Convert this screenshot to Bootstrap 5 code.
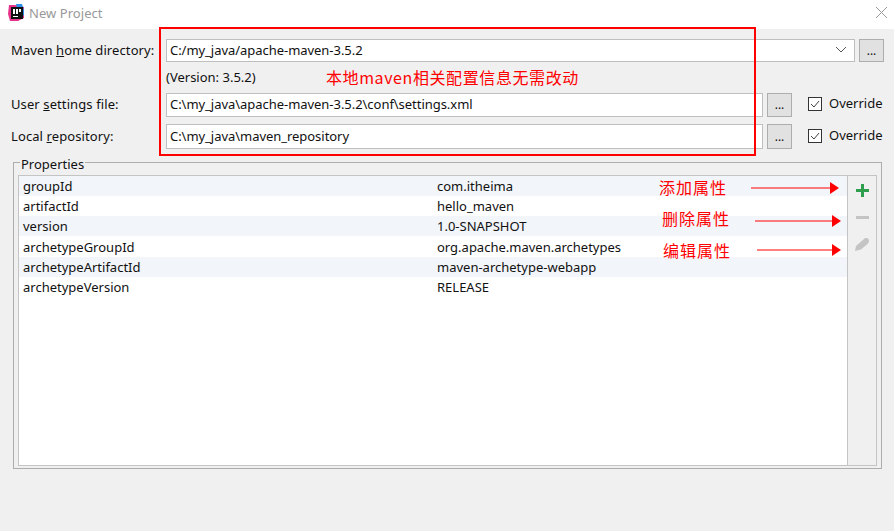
<!DOCTYPE html>
<html lang="zh"><head><meta charset="utf-8"><title>New Project</title>
<link href="https://cdn.jsdelivr.net/npm/bootstrap@5.3.0/dist/css/bootstrap.min.css" rel="stylesheet">
<style>
html,body{height:100%;margin:0}
body{background:#f0f0f0;color:#111;font:13px/18px "Noto Sans","Noto Sans CJK SC",sans-serif;overflow:hidden;position:relative}
.tbar{height:29px;background:#fff;padding:0 0 4px 8px;color:#999}
.tbar .ttl{margin-left:5px;letter-spacing:.05px}
.tbar .cls{margin-left:auto;margin-right:7px}
.frm{padding:10px 10px 0 11px}
.lbl{width:155px;flex:none;letter-spacing:.1px;padding-bottom:2px}
.fld.form-control,.fld.form-select{border-radius:0;border:1px solid #bfbfbf;background:#fff;font-size:13px;line-height:18px;color:#111;padding:0 3px 2px;display:flex;align-items:center;min-height:0;height:100%;letter-spacing:-.04px}
.fld.form-select{background-image:none;justify-content:space-between;padding-right:8px}
.r1{height:23px}.r2{height:16px;margin-top:6px;padding-left:155px;margin-bottom:9px}.r3{height:24px}.r4{height:25px;margin-top:7px}
.cell{flex:1;min-width:0;height:100%}
.b3{width:25px;height:100%;flex:none;margin-left:4px;padding:0;border-radius:0;background:#e1e1e1;border:1px solid #adadad;color:#111;font-size:12px;line-height:14px}
.endc{width:92px;flex:none;padding:0 0 2px 16px}
.endc .form-check-input{width:14px;height:14px;margin:0 7px 0 0;border-radius:0;border:1px solid #333;background-color:#fff;background-image:url("data:image/svg+xml,%3Csvg xmlns='http://www.w3.org/2000/svg' viewBox='0 0 14 14'%3E%3Cpath d='M3 7l3 3 5-6' fill='none' stroke='%23444'/%3E%3C/svg%3E");background-size:14px}
.ovr{padding-bottom:2px}
.rgrp{margin:13px 12px 0 13px;height:307px;border:1px solid #adadad;position:relative;padding:12px 4px 2px 4px}
.lgd{position:absolute;left:6px;top:-6px;background:#f0f0f0;padding:0 1px;line-height:15px}
.tblw{height:100%;border:1px solid #c4c4c4;background:#fff}
.tcol{flex:1;min-width:0}
.prow{height:20px;padding-left:4px;align-items:center}
.prow:nth-child(odd){background:#f2f5f9}
.prow:nth-child(4){height:21px}
.pk{width:414px;flex:none}
.side{width:29px;flex:none;border-left:1px solid #c4c4c4;background:#f0f0f0;padding-top:8px}
.sico{height:27px;line-height:0}
.redb{position:absolute;left:159px;top:27px;width:597px;height:129px;border:2px solid #f00;pointer-events:none}
.note{position:absolute;color:#f00;font-family:"Noto Sans CJK SC",sans-serif;font-size:16px;line-height:20px;white-space:nowrap;letter-spacing:1px}
.note1{left:326px;top:67px;letter-spacing:.6px}
.note2{left:659px;top:177px}
.note3{left:662px;top:208px}
.note4{left:663px;top:240px}
.arw{position:absolute}
.a1{left:750px;top:180px}.a2{left:754px;top:213px}.a3{left:756px;top:242px}
</style></head><body>
<div class="tbar d-flex align-items-center">
<svg width="16" height="17" viewBox="0 0 16 17"><path d="M1 1h6l9 2v11l-6 3H2L0 10z" fill="#e8318a"/><path d="M8 0h6l2 6v6L9 5z" fill="#2f8fe8"/><rect x="3" y="3" width="12" height="12" fill="#111"/><rect x="5" y="5" width="2" height="5" fill="#fff"/><rect x="8" y="5" width="2" height="5" fill="#fff"/><rect x="11" y="5" width="2" height="3" fill="#fff"/><rect x="5" y="12" width="5" height="1" fill="#fff"/></svg>
<span class="ttl">New Project</span>
<svg class="cls" width="11" height="11" viewBox="0 0 11 11"><path d="M0 0l11 11M11 0L0 11" stroke="#999" fill="none"/></svg>
</div>
<div class="frm">
<div class="d-flex align-items-center r1"><div class="lbl">Maven <u>h</u>ome directory:</div><div class="cell"><div class="fld form-select">C:/my_java/apache-maven-3.5.2<svg width="10" height="6" viewBox="0 0 10 6"><path d="M0 0l5 5 5-5" fill="none" stroke="#555"/></svg></div></div><button class="btn b3" type="button">...</button></div>
<div class="r2">(Version: 3.5.2)</div>
<div class="d-flex align-items-center r3"><div class="lbl">User <u>s</u>ettings file:</div><div class="cell"><div class="fld form-control">C:\my_java\apache-maven-3.5.2\conf\settings.xml</div></div><button class="btn b3" type="button">...</button><div class="endc d-flex align-items-center"><input class="form-check-input" type="checkbox" checked aria-label="Override"><span class="ovr">Override</span></div></div>
<div class="d-flex align-items-center r4"><div class="lbl">Local <u>r</u>epository:</div><div class="cell"><div class="fld form-control">C:\my_java\maven_repository</div></div><button class="btn b3" type="button">...</button><div class="endc d-flex align-items-center"><input class="form-check-input" type="checkbox" checked aria-label="Override"><span class="ovr">Override</span></div></div>
</div>
<div class="rgrp">
<div class="lgd">Properties</div>
<div class="tblw d-flex">
<div class="tcol">
<div class="d-flex prow"><div class="pk">groupId</div><div>com.itheima</div></div>
<div class="d-flex prow"><div class="pk">artifactId</div><div>hello_maven</div></div>
<div class="d-flex prow"><div class="pk">version</div><div>1.0-SNAPSHOT</div></div>
<div class="d-flex prow"><div class="pk">archetypeGroupId</div><div>org.apache.maven.archetypes</div></div>
<div class="d-flex prow"><div class="pk">archetypeArtifactId</div><div>maven-archetype-webapp</div></div>
<div class="d-flex prow"><div class="pk">archetypeVersion</div><div>RELEASE</div></div>
</div>
<div class="side d-flex flex-column align-items-center">
<div class="sico"><svg width="13" height="13" viewBox="0 0 13 13"><path d="M5 0h3v5h5v3H8v5H5V8H0V5h5z" fill="#2f9e4f"/></svg></div>
<div class="sico"><svg width="13" height="13" viewBox="0 0 13 13"><rect x="0" y="5" width="13" height="3" fill="#c4c4c4"/></svg></div>
<div class="sico"><svg width="14" height="13" viewBox="0 0 14 13"><path d="M0 13l1-5L9 1c2-2 5-1 5 2 0 1-.5 2-1.500 3L6 11.500z" fill="#c4c4c4"/></svg></div>
</div>
</div>
</div>
<div class="redb"></div>
<div class="note note1">本地maven相关配置信息无需改动</div>
<div class="note note2">添加属性</div>
<div class="note note3">删除属性</div>
<div class="note note4">编辑属性</div>
<svg class="arw a1" width="92" height="16"><path d="M1 8h80" stroke="#f00"/><path d="M80 2l9 6-9 6z" fill="#f00"/></svg>
<svg class="arw a2" width="92" height="16"><path d="M1 8h78" stroke="#f00"/><path d="M78 2l9 6-9 6z" fill="#f00"/></svg>
<svg class="arw a3" width="92" height="16"><path d="M1 8h76" stroke="#f00"/><path d="M76 2l9 6-9 6z" fill="#f00"/></svg>
</body></html>
